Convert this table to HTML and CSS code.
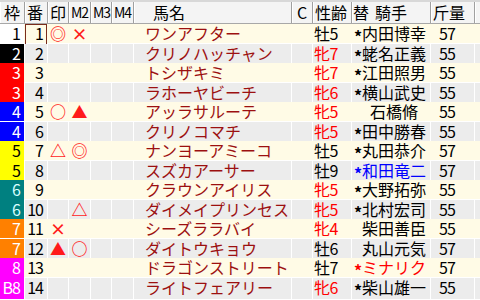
FILE: index.html
```html
<!DOCTYPE html>
<html lang="ja">
<head>
<meta charset="utf-8">
<link rel="stylesheet" href="styles.css">
</head>
<body>
<div class="table">
  <div class="head">
    <div class="h h-waku">枠</div>
    <div class="h">番</div>
    <div class="h">印</div>
    <div class="h h-m">M2</div>
    <div class="h h-m">M3</div>
    <div class="h h-m">M4</div>
    <div class="h h-name">馬名</div>
    <div class="h h-c">C</div>
    <div class="h">性齢</div>
    <div class="h h-jockey">替<span class="sp"></span>騎手</div>
    <div class="h">斤量</div>
    <div class="h"></div>
  </div>
  <div class="rows">
    <div class="row odd">
      <div class="c waku w1">1</div><div class="c num sel">1</div><div class="c mk">◎</div><div class="c mk">×</div><div class="c"></div><div class="c"></div>
      <div class="c name">ワンアフター</div><div class="c"></div><div class="c sex">牡5</div><div class="c jk"><span class="ast">*</span>内田博幸</div><div class="c kg">57</div><div class="c"></div>
    </div>
    <div class="row even">
      <div class="c waku w2">2</div><div class="c num">2</div><div class="c mk"></div><div class="c mk"></div><div class="c"></div><div class="c"></div>
      <div class="c name">クリノハッチャン</div><div class="c"></div><div class="c sex f">牝7</div><div class="c jk"><span class="ast">*</span>蛯名正義</div><div class="c kg">55</div><div class="c"></div>
    </div>
    <div class="row odd">
      <div class="c waku w3">3</div><div class="c num">3</div><div class="c mk"></div><div class="c mk"></div><div class="c"></div><div class="c"></div>
      <div class="c name">トシザキミ</div><div class="c"></div><div class="c sex f">牝7</div><div class="c jk"><span class="ast">*</span>江田照男</div><div class="c kg">55</div><div class="c"></div>
    </div>
    <div class="row even">
      <div class="c waku w3">3</div><div class="c num">4</div><div class="c mk"></div><div class="c mk"></div><div class="c"></div><div class="c"></div>
      <div class="c name">ラホーヤビーチ</div><div class="c"></div><div class="c sex f">牝6</div><div class="c jk"><span class="ast">*</span>横山武史</div><div class="c kg">55</div><div class="c"></div>
    </div>
    <div class="row odd">
      <div class="c waku w4">4</div><div class="c num">5</div><div class="c mk">○</div><div class="c mk">▲</div><div class="c"></div><div class="c"></div>
      <div class="c name">アッラサルーテ</div><div class="c"></div><div class="c sex f">牝5</div><div class="c jk"><span class="ast"></span><span class="pad3">石橋脩</span></div><div class="c kg">55</div><div class="c"></div>
    </div>
    <div class="row even">
      <div class="c waku w4">4</div><div class="c num">6</div><div class="c mk"></div><div class="c mk"></div><div class="c"></div><div class="c"></div>
      <div class="c name">クリノコマチ</div><div class="c"></div><div class="c sex f">牝5</div><div class="c jk"><span class="ast">*</span>田中勝春</div><div class="c kg">55</div><div class="c"></div>
    </div>
    <div class="row odd">
      <div class="c waku w5">5</div><div class="c num">7</div><div class="c mk">△</div><div class="c mk">◎</div><div class="c"></div><div class="c"></div>
      <div class="c name">ナンヨーアミーコ</div><div class="c"></div><div class="c sex">牡5</div><div class="c jk"><span class="ast">*</span>丸田恭介</div><div class="c kg">57</div><div class="c"></div>
    </div>
    <div class="row even">
      <div class="c waku w5">5</div><div class="c num">8</div><div class="c mk"></div><div class="c mk"></div><div class="c"></div><div class="c"></div>
      <div class="c name">スズカアーサー</div><div class="c"></div><div class="c sex">牡9</div><div class="c jk blue"><span class="ast">*</span>和田竜二</div><div class="c kg">57</div><div class="c"></div>
    </div>
    <div class="row odd">
      <div class="c waku w6">6</div><div class="c num">9</div><div class="c mk"></div><div class="c mk"></div><div class="c"></div><div class="c"></div>
      <div class="c name">クラウンアイリス</div><div class="c"></div><div class="c sex f">牝5</div><div class="c jk"><span class="ast">*</span>大野拓弥</div><div class="c kg">55</div><div class="c"></div>
    </div>
    <div class="row even">
      <div class="c waku w6">6</div><div class="c num">10</div><div class="c mk"></div><div class="c mk">△</div><div class="c"></div><div class="c"></div>
      <div class="c name">ダイメイプリンセス</div><div class="c"></div><div class="c sex f">牝5</div><div class="c jk"><span class="ast">*</span>北村宏司</div><div class="c kg">55</div><div class="c"></div>
    </div>
    <div class="row odd">
      <div class="c waku w7">7</div><div class="c num">11</div><div class="c mk">×</div><div class="c mk"></div><div class="c"></div><div class="c"></div>
      <div class="c name">シーズララバイ</div><div class="c"></div><div class="c sex f">牝4</div><div class="c jk"><span class="ast"></span>柴田善臣</div><div class="c kg">55</div><div class="c"></div>
    </div>
    <div class="row even">
      <div class="c waku w7">7</div><div class="c num">12</div><div class="c mk">▲</div><div class="c mk">○</div><div class="c"></div><div class="c"></div>
      <div class="c name">ダイトウキョウ</div><div class="c"></div><div class="c sex">牡6</div><div class="c jk"><span class="ast"></span>丸山元気</div><div class="c kg">57</div><div class="c"></div>
    </div>
    <div class="row odd">
      <div class="c waku w8">8</div><div class="c num">13</div><div class="c mk"></div><div class="c mk"></div><div class="c"></div><div class="c"></div>
      <div class="c name">ドラゴンストリート</div><div class="c"></div><div class="c sex">牡7</div><div class="c jk red"><span class="ast">*</span>ミナリク</div><div class="c kg">57</div><div class="c"></div>
    </div>
    <div class="row even">
      <div class="c waku w8">B8</div><div class="c num">14</div><div class="c mk"></div><div class="c mk"></div><div class="c"></div><div class="c"></div>
      <div class="c name">ライトフェアリー</div><div class="c"></div><div class="c sex f">牝6</div><div class="c jk"><span class="ast">*</span>柴山雄一</div><div class="c kg">55</div><div class="c"></div>
    </div>
  </div>
</div>
</body>
</html>
```
FILE: styles.css
```css
html, body {
  margin: 0;
  padding: 0;
  background: #ffffff;
}
body {
  width: 480px;
  height: 300px;
  overflow: hidden;
  font-family: "Noto Sans CJK JP", "Noto Sans", sans-serif;
  font-size: 16px;
  color: #000;
}
.table {
  display: flex;
  flex-direction: column;
}
.head, .row {
  display: grid;
  grid-template-columns: 24px 22px 20px 21px 20px 21px 157px 20px 38px 78px 43px 1fr;
  column-gap: 1px;
}
.head {
  border-top: 2px solid #d8d8d8;
  border-bottom: 1px solid #a8a8a8;
  background: #a0a0a0;
  height: 21px;
}
.h {
  background: #f4f4f4;
  box-shadow: inset 1px 0 0 #ffffff;
  line-height: 21px;
  padding-left: 2px;
  white-space: nowrap;
}
.h-waku { padding-left: 4px; }
.h-m { font-size: 14px; letter-spacing: -1px; padding-left: 2px; }
.h-name { padding-left: 19px; }
.h-c { padding-left: 5px; }
.h-jockey { padding-left: 1px; }
.sp { display: inline-block; width: 6px; }
.rows {
  display: flex;
  flex-direction: column;
  row-gap: 1px;
  background: #ffffff;
}
.row {
  height: 18.5px;
}
.odd { background: #fffbe6; }
.even { background: #ffffff; }
.even .c { background: #ececec; }
.c {
  line-height: 18px;
  white-space: nowrap;
}
.row .waku {
  text-align: right;
  padding-right: 4px;
  letter-spacing: -1px;
}
.row .c.w1 { background: #ffffff; color: #000; }
.row .c.w2 { background: #000000; color: #ffffff; }
.row .c.w3 { background: #ff0000; color: #ffffff; }
.row .c.w4 { background: #0000ff; color: #ffffff; }
.row .c.w5 { background: #ffff00; color: #000000; }
.row .c.w6 { background: #008080; color: #d8ffff; }
.row .c.w7 { background: #ff8000; color: #ffffff; }
.row .c.w8 { background: #ff00ff; color: #ffffff; }
.num {
  text-align: right;
  padding-right: 4px;
  letter-spacing: -1px;
}
.sel {
  box-shadow: inset 0 0 0 1px #7a2c1c;
}
.mk {
  text-align: center;
  color: #ff1a1a;
  font-size: 16px;
  font-weight: bold;
}
.name {
  color: #9c1010;
  padding-left: 11px;
}
.sex { padding-left: 1px; letter-spacing: -0.5px; }
.sex.f { color: #ff0000; }
.jk { padding-left: 2px; }
.ast {
  display: inline-block;
  width: 8px;
  text-align: center;
  font-weight: bold;
  vertical-align: -3px;
}
.pad3 { padding-left: 8px; }
.jk.blue { color: #0000ff; }
.jk.red { color: #ff0000; }
.kg {
  padding-left: 8px;
  letter-spacing: -1px;
}
```
